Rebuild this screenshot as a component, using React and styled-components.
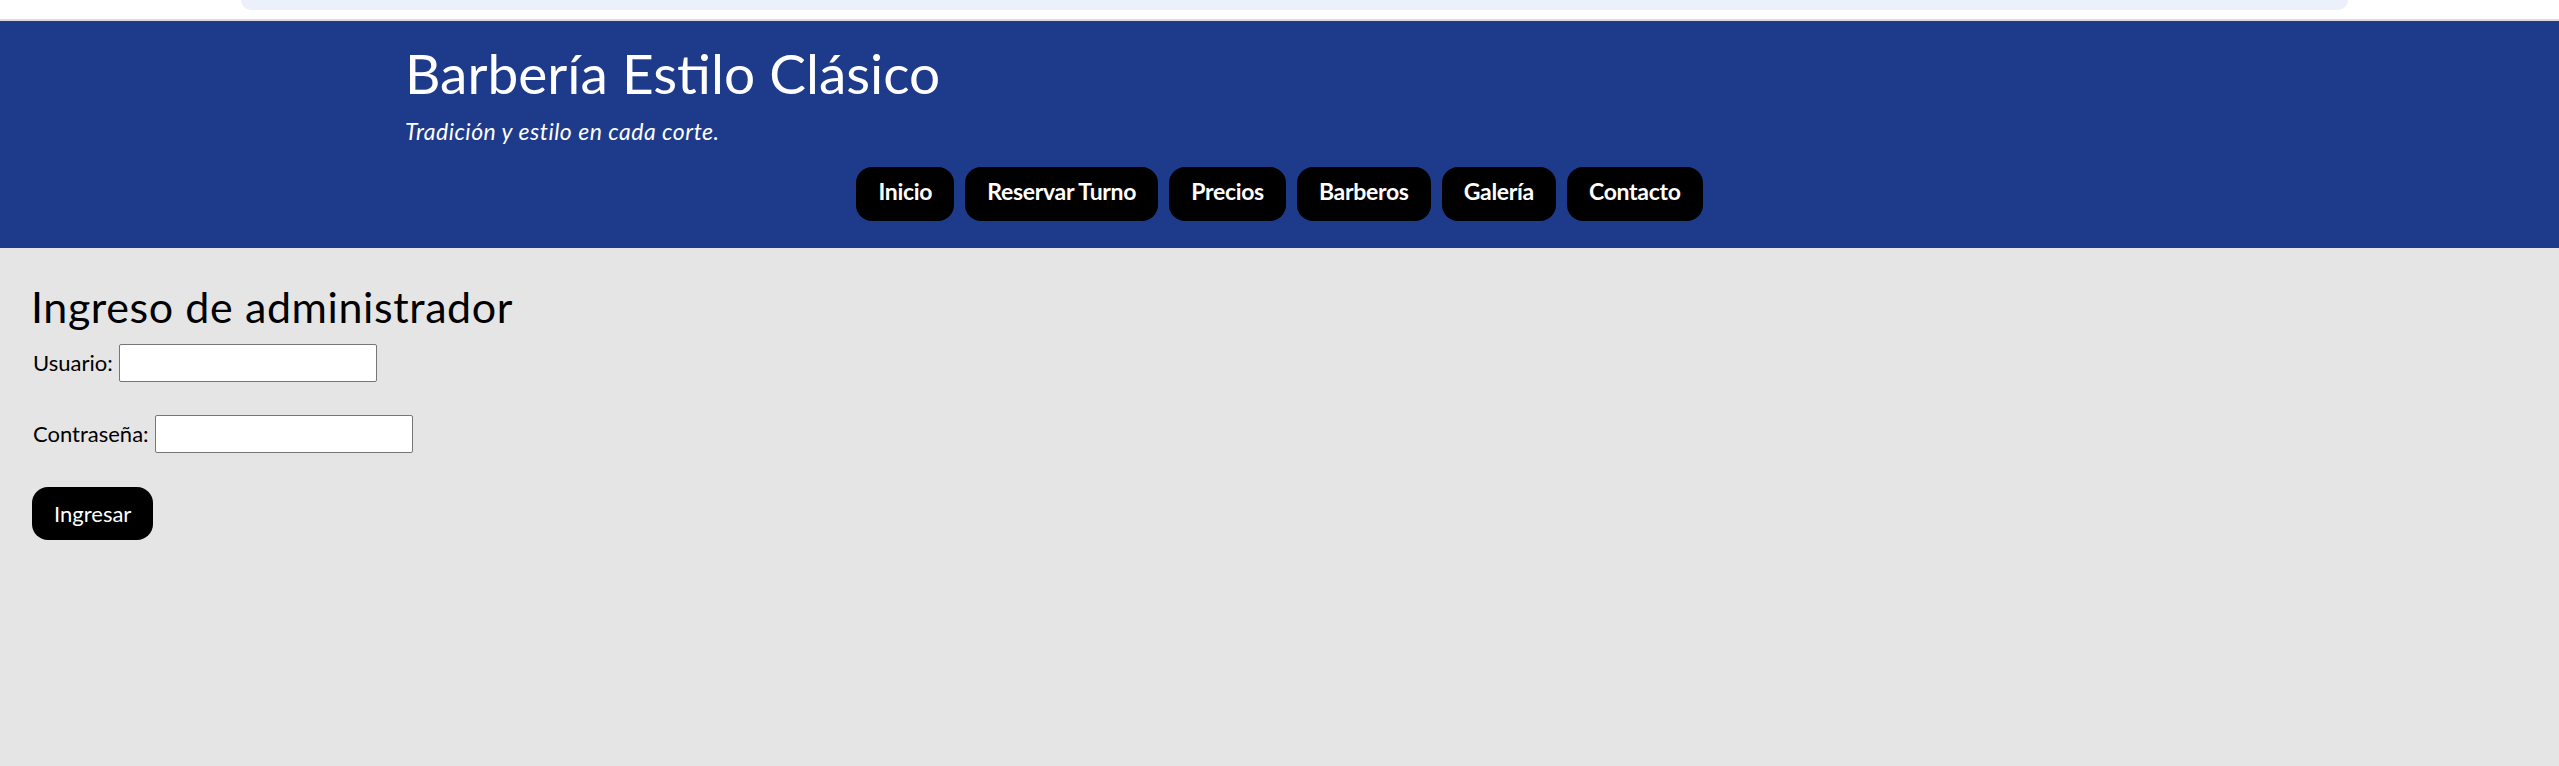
import React from "react";
import styled, { createGlobalStyle } from "styled-components";

const GlobalStyle = createGlobalStyle`
  html, body {
    margin: 0;
    padding: 0;
    background: #e5e5e5;
  }
  body {
    font-family: Lato, "Open Sans", "DejaVu Sans", sans-serif;
    color: #000;
  }
  * { box-sizing: border-box; }
`;

const TopStrip = styled.div`
  height: 19px;
  background: #ffffff;
  padding: 0 211px 0 241px;
`;

const ChromeBar = styled.div`
  height: 10px;
  background: #ebf0fa;
  border-radius: 0 0 18px 18px;
`;

const Divider = styled.div`
  height: 2px;
  background: #dcdcdc;
`;

const Header = styled.header`
  background: #1e3a8a;
  color: #ffffff;
  padding: 25px 0 27px;
  display: flex;
  flex-direction: column;
`;

const Brand = styled.div`
  padding-left: 405px;
  display: flex;
  flex-direction: column;
  gap: 19px;
`;

const Title = styled.h1`
  margin: 0;
  font-size: 55px;
  font-weight: 400;
  line-height: 1;
`;

const Tagline = styled.p`
  margin: 0;
  font-size: 23px;
  font-style: italic;
  letter-spacing: 0.5px;
  line-height: 1;
`;

const Nav = styled.nav`
  margin-top: 24px;
  display: flex;
  justify-content: center;
  gap: 11px;
`;

const NavButton = styled.a`
  display: block;
  background: #000;
  color: #fff;
  text-decoration: none;
  font-size: 23px;
  font-weight: 700;
  letter-spacing: -0.3px;
  line-height: 1;
  padding: 13px 22px 18px;
  border-radius: 16px;
  cursor: pointer;
`;

const Main = styled.main`
  padding: 37px 31px 0;
  display: flex;
  flex-direction: column;
  align-items: flex-start;
`;

const Heading = styled.h2`
  margin: 0 0 16px;
  font-size: 43px;
  font-weight: 400;
  letter-spacing: 0.6px;
  line-height: 1;
`;

const Form = styled.form`
  display: flex;
  flex-direction: column;
  align-items: flex-start;
  gap: 33px;
`;

const Field = styled.div`
  display: flex;
  align-items: center;
  gap: 6px;
`;

const Label = styled.label`
  font-size: 22px;
  line-height: 1;
  padding-left: 2px;
`;

const Input = styled.input`
  width: 258px;
  height: 38px;
  border: 1px solid #767676;
  border-radius: 2px;
  background: #fff;
  padding: 2px 4px;
  font-size: 20px;
  font-family: inherit;
`;

const SubmitButton = styled.button`
  margin: 1px 0 0 1px;
  background: #000;
  color: #fff;
  border: none;
  font-family: inherit;
  font-size: 22px;
  font-weight: 400;
  line-height: 1;
  padding: 0 22px;
  height: 53px;
  border-radius: 16px;
  cursor: pointer;
`;

const links = ["Inicio", "Reservar Turno", "Precios", "Barberos", "Galería", "Contacto"];

export default function App() {
  return (
    <>
      <GlobalStyle />
      <TopStrip>
        <ChromeBar />
      </TopStrip>
      <Divider />
      <Header>
        <Brand>
          <Title>Barbería Estilo Clásico</Title>
          <Tagline>Tradición y estilo en cada corte.</Tagline>
        </Brand>
        <Nav>
          {links.map((l) => (
            <NavButton key={l}>{l}</NavButton>
          ))}
        </Nav>
      </Header>
      <Main>
        <Heading>Ingreso de administrador</Heading>
        <Form onSubmit={(e) => e.preventDefault()}>
          <Field>
            <Label htmlFor="usuario">Usuario:</Label>
            <Input id="usuario" type="text" />
          </Field>
          <Field>
            <Label htmlFor="clave">Contraseña:</Label>
            <Input id="clave" type="password" />
          </Field>
          <SubmitButton type="submit">Ingresar</SubmitButton>
        </Form>
      </Main>
    </>
  );
}
